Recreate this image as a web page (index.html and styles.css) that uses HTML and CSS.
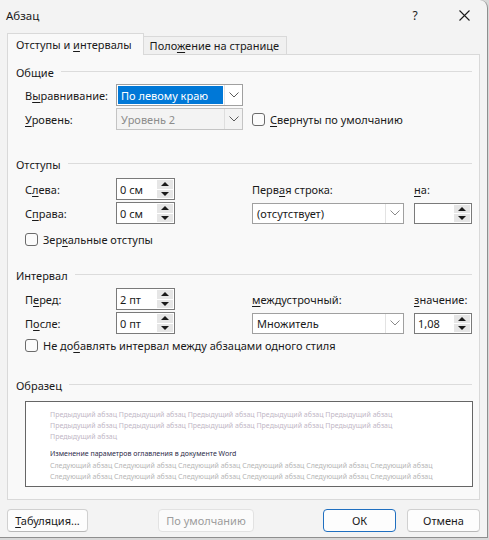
FILE: index.html
```html
<!DOCTYPE html>
<html lang="ru">
<head>
<meta charset="utf-8">
<title>Абзац</title>
<link rel="stylesheet" href="styles.css">
</head>
<body>
<div class="dialog">
  <div class="titlebar">
    <span class="title">Абзац</span>
    <span class="help">?</span>
    <span class="close"><svg width="11" height="11" viewBox="0 0 11 11"><path d="M0.5 0.5 L10.5 10.5 M10.5 0.5 L0.5 10.5" stroke="#1a1a1a" stroke-width="1.1" fill="none"/></svg></span>
  </div>

  <div class="tabs">
    <div class="tab tab-active"><span>Отступы и <u>и</u>нтервалы</span></div>
    <div class="tab"><span>Поло<u>ж</u>ение на странице</span></div>
  </div>

  <div class="panel">
    <div class="sec-head sec-first">Общие</div>
    <div class="grid grid-general">
      <span class="lbl">В<u>ы</u>равнивание:</span>
      <div class="select w-left focused">
        <span class="val"><span class="hl">По левому краю</span></span>
        <span class="drop"><svg width="10" height="6" viewBox="0 0 10 6"><path d="M0.5 0.5 L5 5 L9.5 0.5" stroke="#5a5a5a" fill="none"/></svg></span>
      </div>
      <span class="span3"></span>
      <span class="lbl"><u>У</u>ровень:</span>
      <div class="select w-left disabled">
        <span class="val">Уровень 2</span>
        <span class="drop"><svg width="10" height="6" viewBox="0 0 10 6"><path d="M0.5 0.5 L5 5 L9.5 0.5" stroke="#5a5a5a" fill="none"/></svg></span>
      </div>
      <label class="check span3"><span class="box"></span><span><u>С</u>вернуты по умолчанию</span></label>
    </div>

    <div class="sec-head sec-indent">Отступы</div>
    <div class="grid grid-indent">
      <span class="lbl">С<u>л</u>ева:</span>
      <div class="spin"><span class="sv">0 см</span><span class="arrows"><span class="up"></span><span class="dn"></span></span></div>
      <span class="lbl">Перв<u>а</u>я строка:</span>
      <span></span>
      <span class="lbl"><u>н</u>а:</span>

      <span class="lbl">С<u>п</u>рава:</span>
      <div class="spin"><span class="sv">0 см</span><span class="arrows"><span class="up"></span><span class="dn"></span></span></div>
      <div class="select w-right">
        <span class="val">(отсутствует)</span>
        <span class="drop"><svg width="10" height="6" viewBox="0 0 10 6"><path d="M0.5 0.5 L5 5 L9.5 0.5" stroke="#8a8a8a" fill="none"/></svg></span>
      </div>
      <span></span>
      <div class="spin spin-r"><span class="sv"></span><span class="arrows"><span class="up"></span><span class="dn"></span></span></div>
    </div>
    <label class="check row-check check-mirror"><span class="box"></span><span>Зер<u>к</u>альные отступы</span></label>

    <div class="sec-head sec-interval">Интервал</div>
    <div class="grid grid-interval">
      <span class="lbl">П<u>е</u>ред:</span>
      <div class="spin"><span class="sv">2 пт</span><span class="arrows"><span class="up"></span><span class="dn"></span></span></div>
      <span class="lbl"><u>м</u>еждустрочный:</span>
      <span></span>
      <span class="lbl"><u>з</u>начение:</span>

      <span class="lbl">П<u>о</u>сле:</span>
      <div class="spin"><span class="sv">0 пт</span><span class="arrows"><span class="up"></span><span class="dn"></span></span></div>
      <div class="select w-right">
        <span class="val">Множитель</span>
        <span class="drop"><svg width="10" height="6" viewBox="0 0 10 6"><path d="M0.5 0.5 L5 5 L9.5 0.5" stroke="#8a8a8a" fill="none"/></svg></span>
      </div>
      <span></span>
      <div class="spin spin-r"><span class="sv">1,08</span><span class="arrows"><span class="up"></span><span class="dn"></span></span></div>
    </div>
    <label class="check row-check check-nospace"><span class="box"></span><span>Не до<u>б</u>авлять интервал между абзацами одного стиля</span></label>

    <div class="sec-head sec-sample">Образец</div>
    <div class="preview">
      <div class="pl prev">Предыдущий абзац Предыдущий абзац Предыдущий абзац Предыдущий абзац Предыдущий абзац</div>
      <div class="pl prev">Предыдущий абзац Предыдущий абзац Предыдущий абзац Предыдущий абзац Предыдущий абзац</div>
      <div class="pl prev">Предыдущий абзац</div>
      <div class="pl cur">Изменение параметров оглавления в документе Word</div>
      <div class="pl next">Следующий абзац Следующий абзац Следующий абзац Следующий абзац Следующий абзац Следующий абзац</div>
      <div class="pl next">Следующий абзац Следующий абзац Следующий абзац Следующий абзац Следующий абзац Следующий абзац</div>
    </div>
  </div>

  <div class="buttons">
    <button class="btn btn-tab"><u>Т</u>абуляция...</button>
    <button class="btn btn-default" disabled>По умолчанию</button>
    <button class="btn btn-ok">ОК</button>
    <button class="btn btn-cancel">Отмена</button>
  </div>
</div>
</body>
</html>
```

FILE: styles.css
```css
* { box-sizing: border-box; }

html, body {
  margin: 0;
  padding: 0;
}

body {
  background: #d8d8d8;
  font-family: "Noto Sans", "Open Sans", "DejaVu Sans", sans-serif;
  font-size: 11px;
  color: #1a1a1a;
  width: 489px;
  height: 540px;
  overflow: hidden;
}

u {
  text-decoration-thickness: 1px;
  text-underline-offset: 2px;
}

.dialog {
  width: 488px;
  height: 538px;
  background: #f3f3f3;
  border-right: 1px solid #8e8e8e;
  border-bottom: 1px solid #8e8e8e;
  border-top-right-radius: 8px;
  display: flex;
  flex-direction: column;
}

/* title bar */
.titlebar {
  height: 30px;
  display: flex;
  align-items: center;
  padding-left: 6px;
}
.title {
  flex: 1;
  font-size: 11.5px;
}
.help {
  width: 10px;
  text-align: center;
  margin-right: 39px;
  font-size: 12px;
}
.close {
  display: flex;
  margin-right: 17px;
  margin-top: 1px;
}

/* tabs */
.tabs {
  display: flex;
  align-items: flex-end;
  height: 24px;
  padding-left: 7px;
}
.tab {
  height: 18px;
  padding: 0 7px 0 6px;
  border: 1px solid #d9d9d9;
  border-bottom: none;
  border-left: none;
  background: #f0f0f0;
  display: flex;
  align-items: center;
  white-space: nowrap;
}
.tab-active {
  height: 22px;
  margin-bottom: -1px;
  padding: 0 11px 0 8px;
  border-left: 1px solid #d9d9d9;
  background: #f9f9f9;
  position: relative;
  z-index: 1;
}

/* main panel */
.panel {
  margin: 0 7px;
  height: 446px;
  border: 1px solid #d9d9d9;
  background: #f9f9f9;
  padding: 0 7px 0 8px;
}

.sec-head {
  height: 16px;
  display: flex;
  align-items: center;
  gap: 7px;
  white-space: nowrap;
}
.sec-head::after {
  content: "";
  flex: 1;
  height: 1px;
  margin-top: -2px;
  background: #dcdcdc;
}
.sec-first { margin-top: 9px; }
.sec-indent { margin-top: 26px; }
.sec-interval { margin-top: 20px; }
.sec-sample { margin-top: 24px; }

.grid {
  display: grid;
  grid-template-columns: 91px 136px 152px 10px 58px;
  grid-auto-rows: 22px;
  row-gap: 2px;
  align-items: center;
  margin-left: 9px;
}
.grid-general { margin-top: 4px; }
.grid-indent { margin-top: 6px; }
.grid-interval { margin-top: 5px; }

.lbl { white-space: nowrap; }
.span3 { grid-column: span 3; }

/* select */
.select {
  height: 22px;
  border: 1px solid #a0a0a0;
  background: #fff;
  display: flex;
}
.w-left { width: 127px; }
.w-right { width: 152px; height: 21px; }
.select .val {
  flex: 1;
  display: flex;
  align-items: center;
  padding-left: 4px;
  white-space: nowrap;
}
.select.focused .val {
  padding: 1px;
}
.select .hl {
  display: flex;
  align-items: center;
  height: 100%;
  width: 100%;
  padding-left: 3px;
  background: #0078d7;
  color: #fff;
}
.select .drop {
  width: 18px;
  border-left: 1px solid #e3e3e3;
  display: flex;
  align-items: center;
  justify-content: center;
}
.select.disabled {
  background: #f3f3f3;
  border-color: #c4c4c4;
  color: #8c8c8c;
}
.select.disabled .val { padding-left: 4px; }
.select.disabled .drop { border-left-color: #dedede; }

/* spin */
.spin {
  width: 59px;
  height: 22px;
  border: 1px solid #7a7a7a;
  background: #fff;
  display: flex;
}
.spin-r { width: 58px; height: 21px; }
.spin .sv {
  flex: 1;
  display: flex;
  align-items: center;
  padding-left: 3px;
  white-space: nowrap;
}
.arrows {
  width: 16px;
  margin: 1px 1px 1px 0;
  display: flex;
  flex-direction: column;
  gap: 1px;
}
.arrows .up, .arrows .dn {
  flex: 1;
  background: #e6e6e6;
  display: flex;
  align-items: center;
  justify-content: center;
}
.arrows .up::before {
  content: "";
  border-left: 4px solid transparent;
  border-right: 4px solid transparent;
  border-bottom: 4px solid #1a1a1a;
}
.arrows .dn::before {
  content: "";
  border-left: 4px solid transparent;
  border-right: 4px solid transparent;
  border-top: 4px solid #1a1a1a;
}

/* checkbox */
.check {
  display: flex;
  align-items: center;
  white-space: nowrap;
}
.check .box {
  width: 13px;
  height: 13px;
  border: 1px solid #6b6b6b;
  border-radius: 3px;
  background: #fbfbfb;
  margin-right: 5px;
  flex: none;
}
.row-check {
  height: 16px;
  margin-left: 9px;
}
.check-mirror { margin-top: 7px; }
.check-nospace { margin-top: 3px; }

/* preview */
.preview {
  margin: 8px 0 0 9px;
  width: 448px;
  height: 86px;
  border: 1px solid #666;
  background: #fff;
  padding: 7px 0 0 24px;
  overflow: hidden;
}
.pl {
  height: 11.2px;
  line-height: 11.2px;
  font-size: 7px;
  white-space: nowrap;
}
.prev { color: #bfb7c6; }
.cur { color: #2b2b48; margin-top: 5.8px; }
.next { color: #b6b6b6; }

/* buttons */
.buttons {
  display: flex;
  align-items: center;
  padding: 0 7px;
  margin-top: 9px;
}
.btn {
  height: 23px;
  font: inherit;
  color: #1a1a1a;
  background: #fdfdfd;
  border: 1px solid #d0d0d0;
  border-bottom-color: #b8b8b8;
  border-radius: 4px;
  padding: 0;
}
.btn-tab { width: 81px; }
.btn-default {
  width: 96px;
  margin-left: 70px;
  color: #9d9d9d;
  border-color: #e2e2e2;
  background: #fbfbfb;
}
.btn-ok {
  width: 73px;
  margin-left: auto;
  border: 1px solid #1f6fc0;
}
.btn-cancel {
  width: 73px;
  margin-left: 11px;
}
```
